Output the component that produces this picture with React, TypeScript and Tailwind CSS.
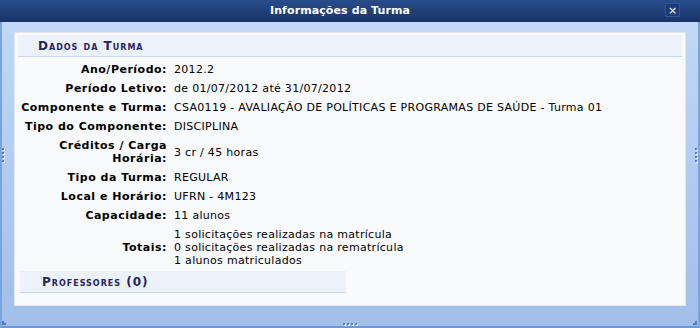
import React from "react";

const rows: { label: React.ReactNode; value: React.ReactNode }[] = [
  { label: "Ano/Período:", value: "2012.2" },
  { label: "Período Letivo:", value: "de 01/07/2012 até 31/07/2012" },
  { label: "Componente e Turma:", value: "CSA0119 - AVALIAÇÃO DE POLÍTICAS E PROGRAMAS DE SAÚDE - Turma 01" },
  { label: "Tipo do Componente:", value: "DISCIPLINA" },
  {
    label: (
      <>
        Créditos / Carga
        <br />
        Horária:
      </>
    ),
    value: "3 cr / 45 horas",
  },
  { label: "Tipo da Turma:", value: "REGULAR" },
  { label: "Local e Horário:", value: "UFRN - 4M123" },
  { label: "Capacidade:", value: "11 alunos" },
  {
    label: "Totais:",
    value: (
      <>
        1 solicitações realizadas na matrícula
        <br />
        0 solicitações realizadas na rematrícula
        <br />
        1 alunos matriculados
      </>
    ),
  },
];

function Grip({ vertical }: { vertical?: boolean }) {
  return (
    <div className={vertical ? "flex flex-col gap-[2px]" : "flex gap-[2px]"}>
      {[0, 1, 2, 3].map((i) => (
        <div key={i} className="h-[2px] w-[2px] bg-[#4f7cc4] shadow-[1px_1px_0_#ffffff]" />
      ))}
    </div>
  );
}

export default function App() {
  return (
    <div
      className="relative flex h-[328px] w-[700px] flex-col overflow-hidden text-[11px] text-black"
      style={{ fontFamily: '"DejaVu Sans", Verdana, sans-serif' }}
    >
      {/* title bar */}
      <div className="relative flex h-[22px] shrink-0 items-center justify-center bg-gradient-to-b from-[#284d8a] to-[#1a3368] pr-[20px]">
        <span className="text-[11px] font-bold tracking-[0.1px] text-white">Informações da Turma</span>
        <div className="absolute right-[20px] top-[3px] flex h-[14px] w-[15px] items-center justify-center border border-[#2f5597] bg-[#1d3b78] text-[11px] leading-none text-white">
          ×
        </div>
      </div>

      {/* body */}
      <div className="flex flex-1 flex-col border-x-2 border-b-2 border-x-[#7da3dc] border-b-[#6f95d2] bg-gradient-to-b from-[#c1d8f6] to-[#a2bfea] px-[12px] pt-[10px] pb-[20px]">
        <div className="flex flex-1 flex-col border border-[#e3e6ea] bg-[#f9fafc] px-[3px] pt-[2px]">
          <div className="flex h-[22px] items-center border-b border-[#c6d6ee] bg-[#edf1f9] pl-[20px]">
            <span className="text-[12px] font-bold tracking-[1px] text-[#24245f] [font-variant:small-caps]">Dados da Turma</span>
          </div>

          <div className="mt-[3px] grid grid-cols-[149px_1fr] gap-x-[7px]">
            {rows.map((r, i) => (
              <React.Fragment key={i}>
                <div className="flex items-center justify-end py-[3px] text-right font-bold leading-[13px] tracking-[0.5px]">
                  <span>{r.label}</span>
                </div>
                <div className="flex items-center py-[3px] leading-[13px] tracking-[0.3px]">
                  <span>{r.value}</span>
                </div>
              </React.Fragment>
            ))}
          </div>

          <div className="mt-[1px] ml-[2px] flex h-[22px] w-[326px] items-center border-b border-[#c6d6ee] bg-[#edf1f9] pl-[22px]">
            <span className="text-[12px] font-bold tracking-[1px] text-[#24245f] [font-variant:small-caps]">Professores (0)</span>
          </div>
        </div>
      </div>

      {/* resize grips */}
      <div className="absolute left-[2px] top-[148px]">
        <Grip vertical />
      </div>
      <div className="absolute right-[3px] top-[148px]">
        <Grip vertical />
      </div>
      <div className="absolute bottom-[3px] left-[343px]">
        <Grip />
      </div>
      <div className="absolute bottom-[3px] left-[2px] h-[4px] w-[4px] border-l-2 border-b-2 border-dotted border-[#4f7cc4]" />
      <div className="absolute bottom-[3px] right-[3px] h-[4px] w-[4px] border-r-2 border-b-2 border-dotted border-[#4f7cc4]" />
    </div>
  );
}
